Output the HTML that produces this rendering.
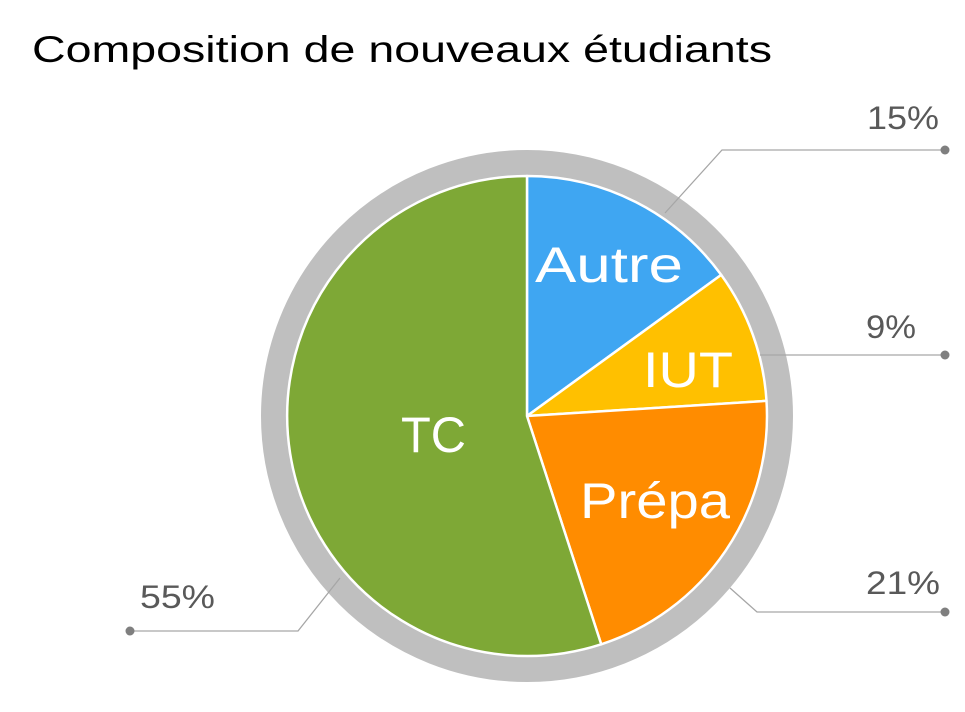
<!DOCTYPE html>
<html><head><meta charset="utf-8"><style>html,body{margin:0;padding:0;background:#fff;}svg{display:block}</style></head>
<body>
<svg width="965" height="712" viewBox="0 0 965 712" xmlns="http://www.w3.org/2000/svg">
<text x="32" y="62" font-family="Liberation Sans, sans-serif" font-size="37" fill="#000" textLength="740" lengthAdjust="spacingAndGlyphs">Composition de nouveaux  étudiants</text>
<circle cx="527" cy="416" r="253" fill="none" stroke="#BFBFBF" stroke-width="26"/>
<g stroke="#fff" stroke-width="2.5" stroke-linejoin="round">
<path d="M527 416 L527 176 A240 240 0 0 1 721.2 274.9 Z" fill="#3FA6F2"/>
<path d="M527 416 L721.2 274.9 A240 240 0 0 1 766.5 400.9 Z" fill="#FFC000"/>
<path d="M527 416 L766.5 400.9 A240 240 0 0 1 601.2 644.3 Z" fill="#FF8C00"/>
<path d="M527 416 L601.2 644.3 A240 240 0 1 1 527 176 Z" fill="#7EA836"/>
</g>
<g font-family="Liberation Sans, sans-serif" fill="#fff" font-size="50">
<text x="535" y="282" textLength="148" lengthAdjust="spacingAndGlyphs">Autre</text>
<text x="643" y="387" textLength="90" lengthAdjust="spacingAndGlyphs">IUT</text>
<text x="580" y="518" textLength="150" lengthAdjust="spacingAndGlyphs">Prépa</text>
<text x="401" y="452" textLength="65" lengthAdjust="spacingAndGlyphs">TC</text>
</g>
<g stroke="#A6A6A6" stroke-width="1.3" fill="none">
<polyline points="665,213 722,150 945,150"/>
<polyline points="760,355 945,355"/>
<polyline points="730,588 757,612 945,612"/>
<polyline points="340,578 298,631 130,631"/>
</g>
<g fill="#7F7F7F">
<circle cx="945" cy="150" r="4.5"/><circle cx="945" cy="355" r="4.5"/>
<circle cx="945" cy="612" r="4.5"/><circle cx="130" cy="631" r="4.5"/>
</g>
<g font-family="Liberation Sans, sans-serif" fill="#595959" font-size="32">
<text x="867" y="129" textLength="72" lengthAdjust="spacingAndGlyphs">15%</text>
<text x="866" y="338" textLength="50" lengthAdjust="spacingAndGlyphs">9%</text>
<text x="866" y="594" textLength="74" lengthAdjust="spacingAndGlyphs">21%</text>
<text x="140" y="608" textLength="75" lengthAdjust="spacingAndGlyphs">55%</text>
</g>
</svg>
</body></html>
